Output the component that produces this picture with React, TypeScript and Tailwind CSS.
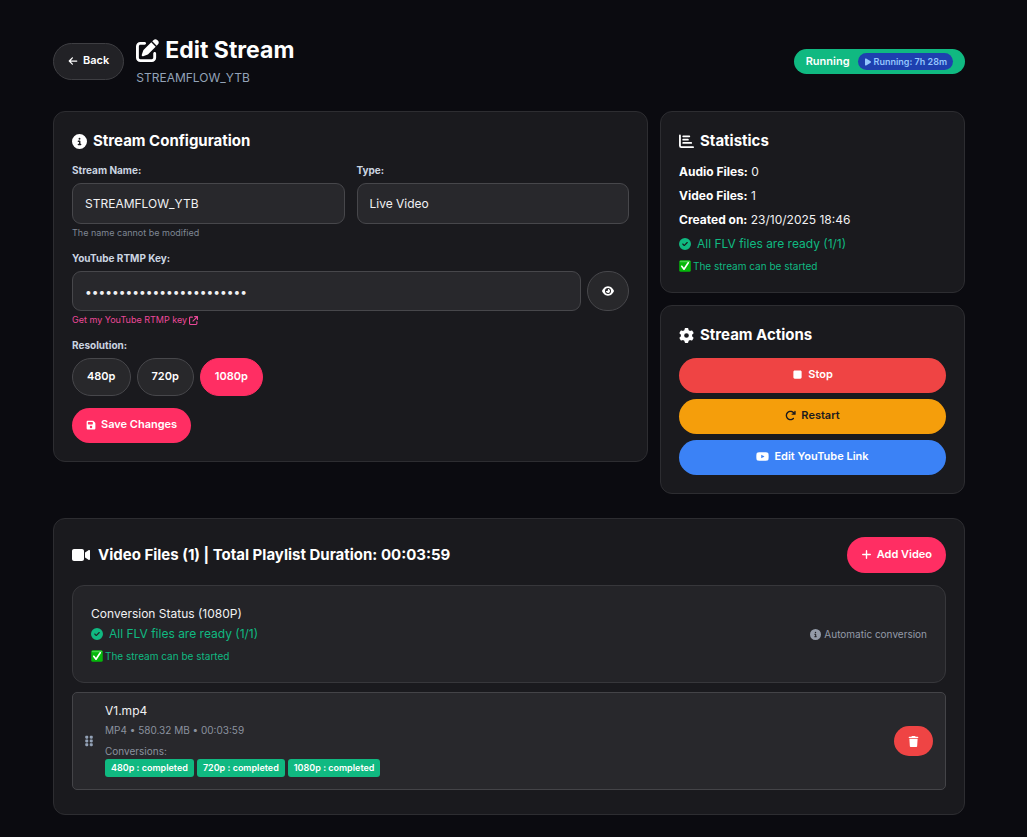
import { useState } from "react"
import type { ReactNode } from "react"
import {
  FaArrowLeft,
  FaArrowRotateRight,
  FaArrowUpRightFromSquare,
  FaCircleCheck,
  FaCircleInfo,
  FaEye,
  FaFloppyDisk,
  FaGear,
  FaGripVertical,
  FaPenToSquare,
  FaPlay,
  FaPlus,
  FaStop,
  FaTrash,
  FaVideo,
  FaYoutube,
} from "react-icons/fa6"

const resolutions = ["480p", "720p", "1080p"]

const stats = [
  { label: "Audio Files:", value: "0" },
  { label: "Video Files:", value: "1" },
  { label: "Created on:", value: "23/10/2025 18:46" },
]

const actions = [
  { label: "Stop", icon: <FaStop className="size-[11px]" />, color: "bg-[#ef4444] text-white" },
  { label: "Restart", icon: <FaArrowRotateRight className="size-[11px]" />, color: "bg-[#f59e0b] text-[#1a1a1e]" },
  { label: "Edit YouTube Link", icon: <FaYoutube className="size-[13px]" />, color: "bg-[#3b82f6] text-white" },
]

function Card({ children, className = "p-[18px]" }: { children: ReactNode; className?: string }) {
  return <section className={`rounded-xl border border-[#2d2d31] bg-[#1a1a1e] ${className}`}>{children}</section>
}

function CardTitle({ icon, children }: { icon: ReactNode; children: ReactNode }) {
  return (
    <h2 className="flex items-center gap-1.5 text-[15px] leading-[22px] font-bold text-white">
      {icon}
      {children}
    </h2>
  )
}

function ChartIcon() {
  return (
    <svg
      viewBox="0 0 512 512"
      className="size-[15px]"
      fill="none"
      stroke="currentColor"
      strokeWidth="62"
      strokeLinecap="round"
      strokeLinejoin="round"
    >
      <path d="M32 48v352c0 27 21 48 48 48h400M144 80h208M144 192h160M144 304h272" />
    </svg>
  )
}

function CheckEmoji() {
  return (
    <svg viewBox="0 0 24 24" className="size-3 shrink-0">
      <rect x="0.5" y="0.5" width="23" height="23" rx="3" fill="#05b80b" />
      <rect x="1.5" y="1.5" width="21" height="3" rx="1.5" fill="#5be05f" opacity="0.7" />
      <path
        d="M5.5 12.5l4.5 6 8.5-13"
        fill="none"
        stroke="#fff"
        strokeWidth="3.2"
        strokeLinecap="round"
        strokeLinejoin="round"
      />
    </svg>
  )
}

function ReadyStatus() {
  return (
    <span className="flex items-center gap-1.5 text-[#10b981]">
      <FaCircleCheck className="size-3" />
      All FLV files are ready (1/1)
    </span>
  )
}

function CanStart() {
  return (
    <p className="flex items-center gap-0.5 text-[10px] leading-4 text-[#10b981]">
      <CheckEmoji />
      The stream can be started
    </p>
  )
}

export default function App() {
  const [resolution, setResolution] = useState("1080p")
  const [showKey, setShowKey] = useState(false)

  const labelClass = "block text-[10px] leading-4 font-bold text-[#cbd5e1]"
  const inputClass =
    "w-full min-w-0 rounded-[9px] border border-[#47474b] bg-[#28282c] px-3 text-[12px] text-[#f1f1f3] outline-none"

  return (
    <div className="min-h-screen bg-[#0b0b10] pt-9 pr-[62px] pb-[22px] pl-[53px] font-['Inter',sans-serif] text-[12px] text-[#f1f1f3]">
      <header className="flex items-center justify-between">
        <div className="flex items-center gap-3">
          <button className="flex h-[37px] items-center gap-[5px] rounded-full border border-[#3e3e42] bg-[#222226] px-3.5 pb-0.5 text-[11px] font-semibold text-white">
            <FaArrowLeft className="size-[10px]" />
            Back
          </button>
          <div>
            <h1 className="flex items-center gap-1.5 text-[23px] leading-7 font-bold text-white">
              <FaPenToSquare className="size-[23px]" />
              Edit Stream
            </h1>
            <p className="mt-1 text-[12px] leading-[19px] text-[#94a3b8]">STREAMFLOW_YTB</p>
          </div>
        </div>
        <div className="flex h-[25px] items-center gap-2 rounded-full bg-[#10b981] px-3 text-[11px] font-semibold text-white">
          Running
          <span className="flex h-[17px] items-center gap-0.5 rounded-full bg-[#1e40af] px-1.5 text-[9px] font-semibold text-[#93c5fd]">
            <FaPlay className="size-2" />
            Running: 7h 28m
          </span>
        </div>
      </header>

      <div className="mt-6 grid grid-cols-1 items-start gap-3 md:grid-cols-[minmax(0,119fr)_minmax(0,61fr)]">
        <Card>
          <CardTitle icon={<FaCircleInfo className="size-[15px]" />}>Stream Configuration</CardTitle>
          <form onSubmit={(e) => e.preventDefault()}>
            <div className="mt-2.5 grid grid-cols-2 gap-3">
              <div>
                <label htmlFor="name" className={labelClass}>
                  Stream Name:
                </label>
                <input id="name" className={`${inputClass} mt-[5px] block h-[41px]`} value="STREAMFLOW_YTB" readOnly />
                <p className="mt-0.5 text-[9px] leading-[14px] text-[#7f8794]">The name cannot be modified</p>
              </div>
              <div>
                <label htmlFor="type" className={labelClass}>
                  Type:
                </label>
                <input id="type" className={`${inputClass} mt-[5px] block h-[41px]`} value="Live Video" readOnly />
              </div>
            </div>

            <label htmlFor="key" className={`${labelClass} mt-2.5`}>
              YouTube RTMP Key:
            </label>
            <div className="mt-[5px] flex gap-1.5">
              <input
                id="key"
                type={showKey ? "text" : "password"}
                className={`${inputClass} h-10`}
                defaultValue="abcd-efgh-ijkl-mnop-qrst"
              />
              <button
                type="button"
                aria-label="Show key"
                onClick={() => setShowKey(!showKey)}
                className="flex h-10 w-[42px] shrink-0 items-center justify-center rounded-full border border-[#47474b] bg-[#28282b] text-white"
              >
                <FaEye className="size-3" />
              </button>
            </div>
            <a href="#" className="mt-0.5 flex items-center gap-0.5 text-[9px] leading-[14px] text-[#ec4899]">
              Get my YouTube RTMP key
              <FaArrowUpRightFromSquare className="size-[9px]" />
            </a>

            <fieldset className="mt-2.5">
              <legend className={labelClass}>Resolution:</legend>
              <div className="mt-[5px] flex gap-1.5">
                {resolutions.map((item) => (
                  <button
                    key={item}
                    type="button"
                    onClick={() => setResolution(item)}
                    className={`h-[38px] rounded-full border px-3.5 pb-0.5 text-[11px] font-semibold text-white ${
                      item === resolution ? "border-[#ff2e63] bg-[#ff2e63]" : "border-[#47474b] bg-[#28282b]"
                    }`}
                  >
                    {item}
                  </button>
                ))}
              </div>
            </fieldset>

            <button className="mt-3 flex h-[35px] items-center gap-[5px] rounded-full bg-[#ff2e63] px-3.5 pb-0.5 text-[11px] font-semibold text-white">
              <FaFloppyDisk className="size-[10px]" />
              Save Changes
            </button>
          </form>
        </Card>

        <div className="flex flex-col gap-3">
          <Card>
            <CardTitle icon={<ChartIcon />}>Statistics</CardTitle>
            <div className="mt-2 leading-6">
              {stats.map((stat) => (
                <p key={stat.label}>
                  <strong className="font-bold text-white">{stat.label}</strong> {stat.value}
                </p>
              ))}
              <ReadyStatus />
            </div>
            <div className="mt-0.5">
              <CanStart />
            </div>
          </Card>

          <Card>
            <CardTitle icon={<FaGear className="size-[15px]" />}>Stream Actions</CardTitle>
            <div className="mt-3 flex flex-col gap-1.5">
              {actions.map((action) => (
                <button
                  key={action.label}
                  className={`flex h-[35px] items-center justify-center gap-[5px] rounded-full pb-0.5 text-[11px] font-semibold ${action.color}`}
                >
                  {action.icon}
                  {action.label}
                </button>
              ))}
            </div>
          </Card>
        </div>
      </div>

      <Card className="mt-6 px-[18px] pt-[18px] pb-6">
        <div className="flex items-center justify-between">
          <CardTitle icon={<FaVideo className="mr-0.5 size-[18px]" />}>
            Video Files (1) | Total Playlist Duration: 00:03:59
          </CardTitle>
          <button className="flex h-9 items-center gap-[5px] rounded-full bg-[#ff2e63] px-3.5 pb-0.5 text-[11px] font-semibold text-white">
            <FaPlus className="size-[11px]" />
            Add Video
          </button>
        </div>

        <div className="mt-3 flex items-center justify-between rounded-xl border border-[#37373b] bg-[#242428] p-[18px]">
          <div className="leading-5">
            <p>Conversion Status (1080P)</p>
            <ReadyStatus />
            <div className="mt-1">
              <CanStart />
            </div>
          </div>
          <p className="flex items-center gap-[3px] text-[10px] text-[#949ba8]">
            <FaCircleInfo className="size-[11px]" />
            Automatic conversion
          </p>
        </div>

        <div className="mt-[9px] flex items-center gap-3 rounded-[5px] border border-[#444448] bg-[#28282c] px-3 py-2">
          <FaGripVertical className="h-3 w-2 text-[#94a3b8]" />
          <div className="flex-1 pb-1">
            <p className="text-[12px] leading-5">V1.mp4</p>
            <p className="text-[10px] leading-[18px] text-[#8b929f]">MP4 • 580.32 MB • 00:03:59</p>
            <p className="mt-1 text-[10px] leading-4 text-[#8b929f]">Conversions:</p>
            <div className="flex gap-[3px]">
              {resolutions.map((item) => (
                <span
                  key={item}
                  className="rounded-[3px] bg-[#10b981] px-1.5 text-[9px] leading-[18px] font-semibold text-white"
                >
                  {item} : completed
                </span>
              ))}
            </div>
          </div>
          <button
            aria-label="Delete video"
            className="flex h-[30px] w-[39px] items-center justify-center rounded-full bg-[#ef4444] text-white"
          >
            <FaTrash className="size-[11px]" />
          </button>
        </div>
      </Card>
    </div>
  )
}
